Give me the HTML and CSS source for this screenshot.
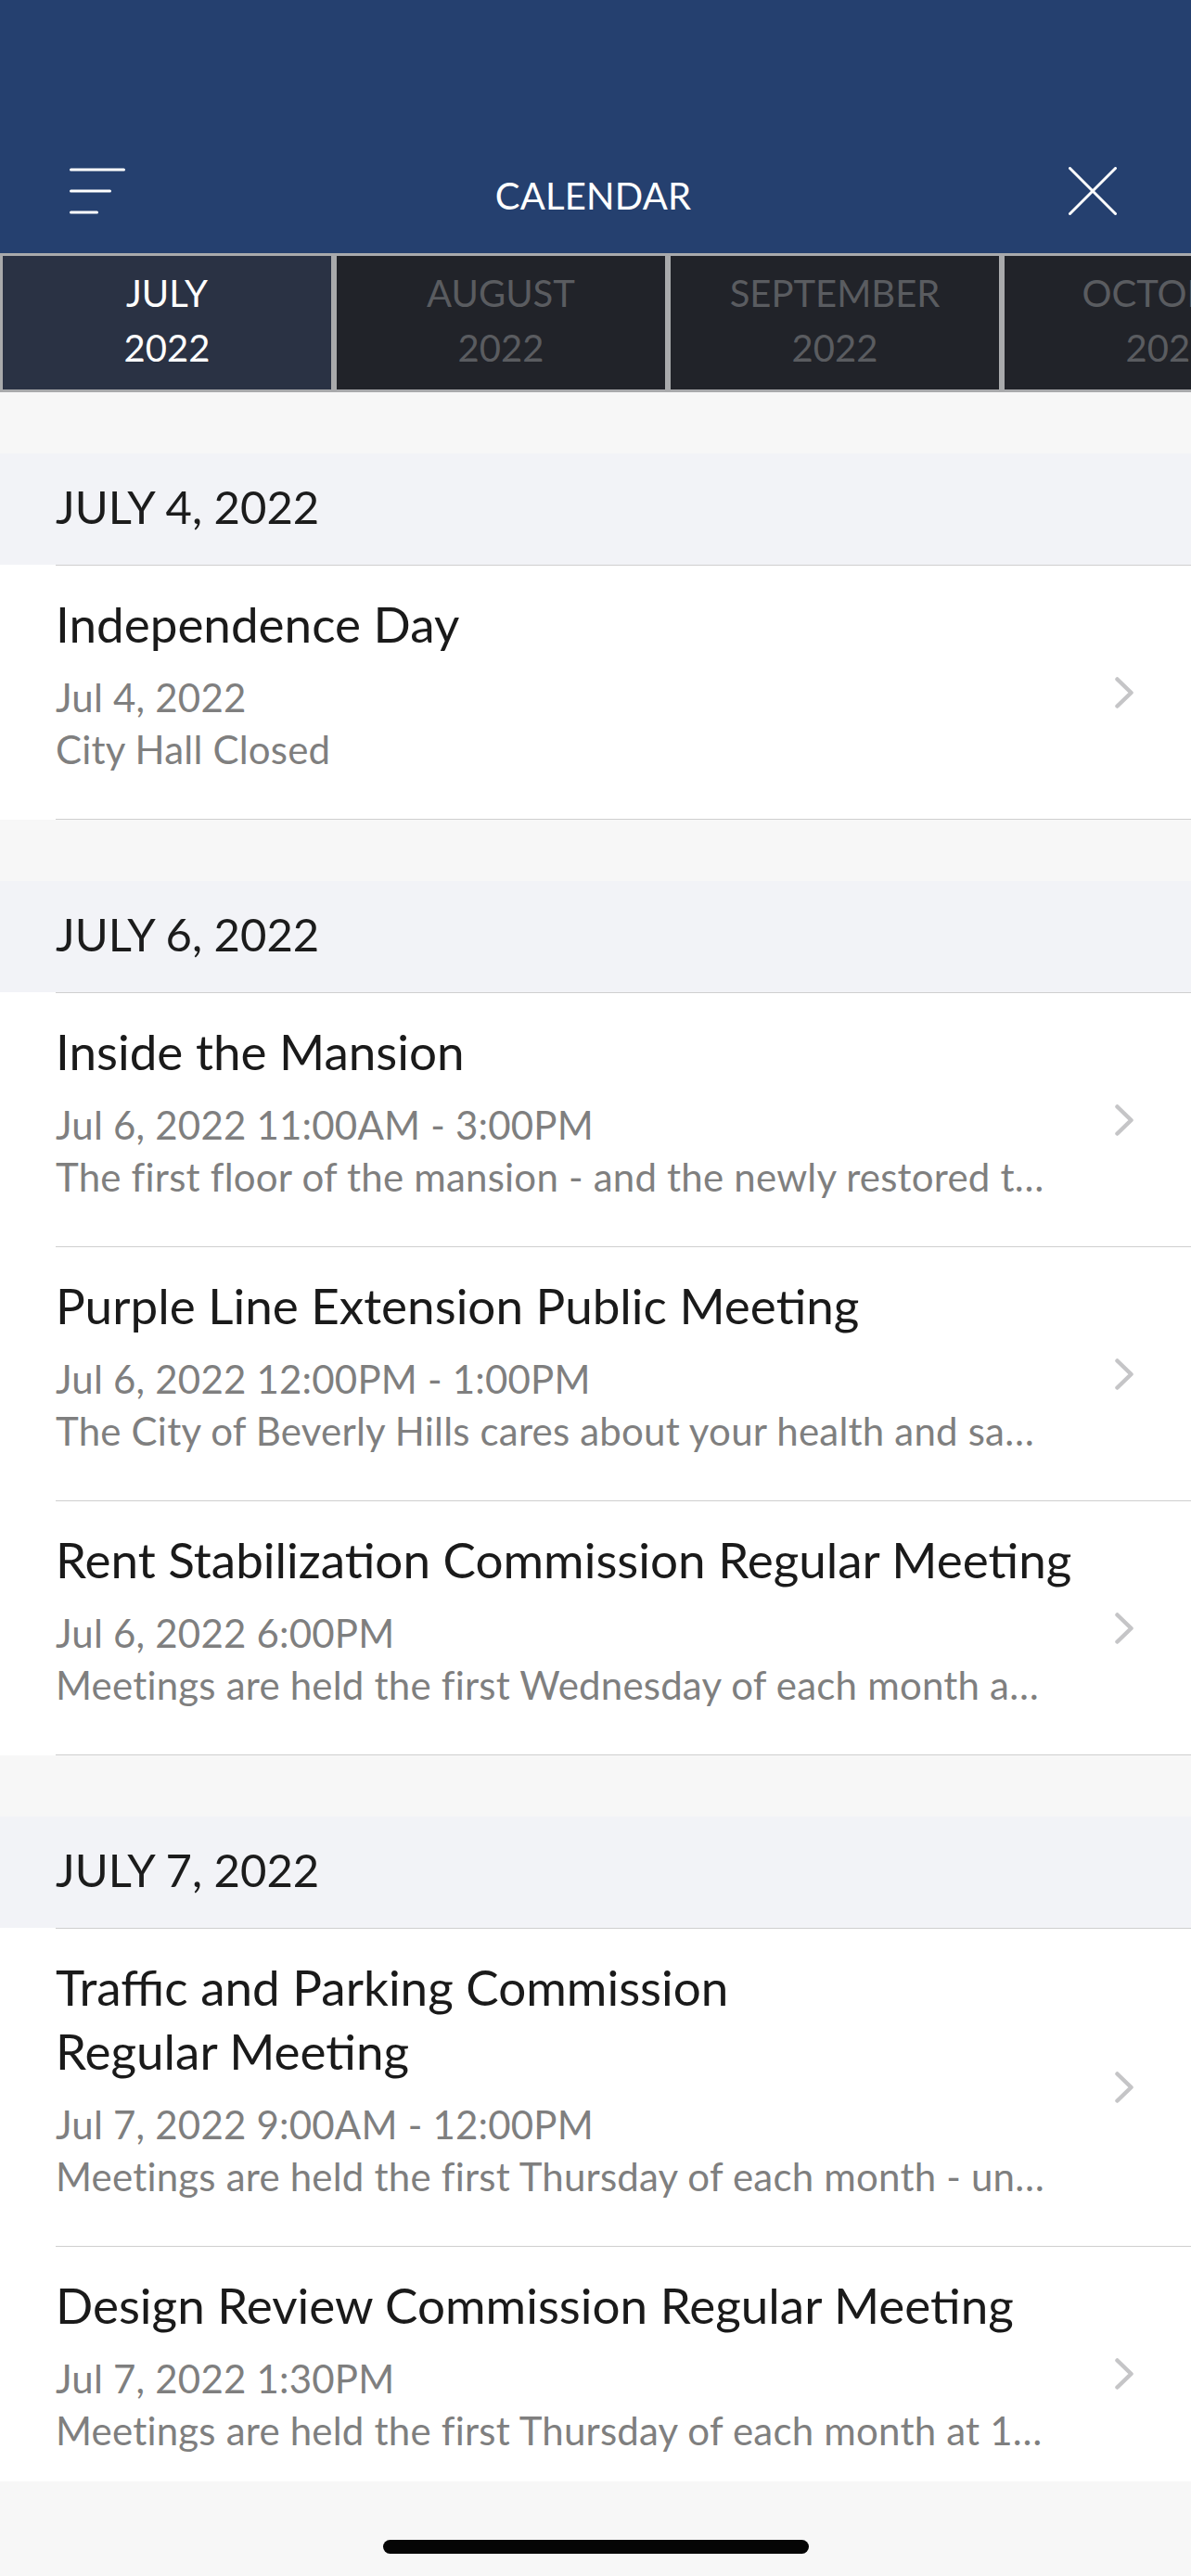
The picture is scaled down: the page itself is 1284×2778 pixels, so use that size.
FILE: index.html
```html
<!DOCTYPE html>
<html lang="en">
<head>
    <meta charset="UTF-8">
    <meta name="viewport" content="width=device-width, initial-scale=1.0">
    <title>Calendar</title>
    <link rel="stylesheet" href="styles.css">
</head>
<body>
    <div class="app">
        <header class="topbar">
            <div class="nav">
                <button class="nav-btn menu-btn" aria-label="Menu">
                    <svg width="60" height="52" viewBox="0 0 60 52">
                        <line x1="1.5" y1="3" x2="58.5" y2="3"/>
                        <line x1="1.5" y1="26" x2="43.5" y2="26"/>
                        <line x1="1.5" y1="49" x2="29.5" y2="49"/>
                    </svg>
                </button>
                <h1 class="nav-title">CALENDAR</h1>
                <button class="nav-btn close-btn" aria-label="Close">
                    <svg width="52" height="52" viewBox="0 0 52 52">
                        <line x1="1.5" y1="1.5" x2="50.5" y2="50.5"/>
                        <line x1="50.5" y1="1.5" x2="1.5" y2="50.5"/>
                    </svg>
                </button>
            </div>
        </header>

        <nav class="months">
            <a class="month active" href="#">JULY<br>2022</a>
            <a class="month" href="#">AUGUST<br>2022</a>
            <a class="month" href="#">SEPTEMBER<br>2022</a>
            <a class="month" href="#">OCTOBER<br>2022</a>
        </nav>

        <main class="agenda">
            <section class="day">
                <h2 class="day-title">JULY 4, 2022</h2>
                <ul class="events">
                    <li class="event">
                        <a class="event-row" href="#">
                            <div class="event-text">
                                <div class="event-name">Independence Day</div>
                                <div class="event-meta">Jul 4, 2022</div>
                                <div class="event-meta">City Hall Closed</div>
                            </div>
                            <svg class="chevron" width="20" height="34" viewBox="0 0 20 34"><polyline points="2.5,2.5 17.5,17 2.5,31.5"/></svg>
                        </a>
                    </li>
                </ul>
            </section>

            <section class="day">
                <h2 class="day-title">JULY 6, 2022</h2>
                <ul class="events">
                    <li class="event">
                        <a class="event-row" href="#">
                            <div class="event-text">
                                <div class="event-name">Inside the Mansion</div>
                                <div class="event-meta">Jul 6, 2022 11:00AM - 3:00PM</div>
                                <div class="event-meta">The first floor of the mansion - and the newly restored t…</div>
                            </div>
                            <svg class="chevron" width="20" height="34" viewBox="0 0 20 34"><polyline points="2.5,2.5 17.5,17 2.5,31.5"/></svg>
                        </a>
                    </li>
                    <li class="event">
                        <a class="event-row" href="#">
                            <div class="event-text">
                                <div class="event-name">Purple Line Extension Public Meeting</div>
                                <div class="event-meta">Jul 6, 2022 12:00PM - 1:00PM</div>
                                <div class="event-meta">The City of Beverly Hills cares about your health and sa…</div>
                            </div>
                            <svg class="chevron" width="20" height="34" viewBox="0 0 20 34"><polyline points="2.5,2.5 17.5,17 2.5,31.5"/></svg>
                        </a>
                    </li>
                    <li class="event">
                        <a class="event-row" href="#">
                            <div class="event-text">
                                <div class="event-name">Rent Stabilization Commission Regular Meeting</div>
                                <div class="event-meta">Jul 6, 2022 6:00PM</div>
                                <div class="event-meta">Meetings are held the first Wednesday of each month a…</div>
                            </div>
                            <svg class="chevron" width="20" height="34" viewBox="0 0 20 34"><polyline points="2.5,2.5 17.5,17 2.5,31.5"/></svg>
                        </a>
                    </li>
                </ul>
            </section>

            <section class="day">
                <h2 class="day-title">JULY 7, 2022</h2>
                <ul class="events">
                    <li class="event">
                        <a class="event-row" href="#">
                            <div class="event-text">
                                <div class="event-name">Traffic and Parking Commission Regular&nbsp;Meeting</div>
                                <div class="event-meta">Jul 7, 2022 9:00AM - 12:00PM</div>
                                <div class="event-meta">Meetings are held the first Thursday of each month - un…</div>
                            </div>
                            <svg class="chevron" width="20" height="34" viewBox="0 0 20 34"><polyline points="2.5,2.5 17.5,17 2.5,31.5"/></svg>
                        </a>
                    </li>
                    <li class="event">
                        <a class="event-row" href="#">
                            <div class="event-text">
                                <div class="event-name">Design Review Commission Regular Meeting</div>
                                <div class="event-meta">Jul 7, 2022 1:30PM</div>
                                <div class="event-meta">Meetings are held the first Thursday of each month at 1…</div>
                            </div>
                            <svg class="chevron" width="20" height="34" viewBox="0 0 20 34"><polyline points="2.5,2.5 17.5,17 2.5,31.5"/></svg>
                        </a>
                    </li>
                </ul>
            </section>
        </main>

        <div class="home-bar">
            <span class="home-indicator"></span>
        </div>
    </div>
</body>
</html>
```

FILE: styles.css
```css
body {
    margin: 0;
    background: #f7f7f7;
    font-family: 'Lato', 'Open Sans', sans-serif;
    color: #1a1a1a;
}

.app {
    display: flex;
    flex-direction: column;
    height: 100vh;
    overflow: hidden;
}

/* top bar */
.topbar {
    background: #25406f;
    height: 273px;
    display: flex;
    align-items: flex-end;
    flex-shrink: 0;
}

.nav {
    display: grid;
    grid-template-columns: 1fr auto 1fr;
    align-items: center;
    width: 100%;
    height: 134px;
    padding: 0 80px 0 75px;
    box-sizing: border-box;
}

.nav-btn {
    background: none;
    border: none;
    padding: 0;
    display: flex;
    cursor: pointer;
}

.nav-btn svg {
    stroke: #fff;
    stroke-width: 3;
    stroke-linecap: round;
    fill: none;
}

.menu-btn {
    justify-self: start;
}

.close-btn {
    justify-self: end;
}

.nav-title {
    margin: 0;
    padding-top: 10px;
    color: #fff;
    font-size: 40px;
    font-weight: 400;
    letter-spacing: 0.2px;
}

/* month tabs */
.months {
    display: flex;
    overflow: hidden;
    flex-shrink: 0;
}

.month {
    flex: 0 0 360px;
    height: 150px;
    box-sizing: border-box;
    border: 3px solid #a9aaac;
    background: #212329;
    color: #5a5c60;
    text-decoration: none;
    text-align: center;
    font-size: 40px;
    line-height: 59px;
    padding-top: 11px;
}

.month.active {
    background: #2a3244;
    color: #fff;
}

/* agenda list */
.agenda {
    flex: 1;
    overflow: hidden;
    background: #f7f7f7;
}

.day {
    padding-top: 66px;
}

.day-title {
    margin: 0;
    height: 120px;
    box-sizing: border-box;
    padding: 28px 60px 0;
    background: #f2f3f7;
    font-size: 49px;
    font-weight: 400;
    line-height: 59px;
    color: #1c1c1c;
}

.events {
    list-style: none;
    margin: 0;
    padding: 0;
    background: #fff;
}

.event {
    padding-left: 60px;
}

.event-row {
    display: flex;
    align-items: center;
    border-top: 1.5px solid #cfcfcf;
    padding-right: 62px;
    color: inherit;
    text-decoration: none;
}

.event:last-child .event-row {
    border-bottom: 1.5px solid #cfcfcf;
}

.event-text {
    flex: 1;
    min-width: 0;
    padding: 28px 0 47px;
    margin-right: 40px;
}

.event-name {
    font-size: 53px;
    line-height: 69px;
    color: #1a1a1a;
}

.event-meta {
    font-size: 42px;
    line-height: 56px;
    color: #7f7f7f;
    letter-spacing: 0.2px;
    white-space: nowrap;
    overflow: hidden;
    text-overflow: ellipsis;
}

.event-name + .event-meta {
    margin-top: 17px;
}

.chevron {
    flex-shrink: 0;
    fill: none;
    stroke: #c5c5c7;
    stroke-width: 4.5;
    stroke-linecap: round;
    stroke-linejoin: round;
}

/* home indicator */
.home-bar {
    height: 102px;
    flex-shrink: 0;
    display: flex;
    justify-content: center;
    align-items: flex-end;
    padding-bottom: 24px;
    box-sizing: border-box;
    background: #f7f7f7;
}

.home-indicator {
    width: 459px;
    height: 15px;
    border-radius: 8px;
    background: #050505;
}
```
